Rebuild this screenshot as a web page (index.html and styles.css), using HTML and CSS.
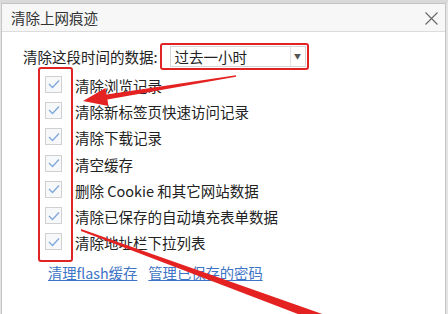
FILE: index.html
```html
<!DOCTYPE html>
<html lang="zh-CN">
<head>
  <meta charset="UTF-8">
  <title>清除上网痕迹</title>
  <link rel="stylesheet" href="styles.css">
</head>
<body>
  <div class="backdrop"></div>
  <div class="dialog">
    <div class="titlebar">
      <span class="title">清除上网痕迹</span>
      <span class="close">
        <svg width="13" height="13" viewBox="0 0 13 13"><path d="M0.5 0.5L12.5 12.5M12.5 0.5L0.5 12.5" stroke="#666" stroke-width="1.1" fill="none"/></svg>
      </span>
    </div>

    <div class="content">
      <div class="range-row">
        <span class="range-label">清除这段时间的数据:</span>
        <div class="mark select-mark">
          <div class="select">
            <span class="select-value">过去一小时</span>
            <span class="select-arrow">▼</span>
          </div>
        </div>
      </div>

      <div class="options">
        <span class="mark check-mark"></span>
        <label class="option"><span class="checkbox"><svg width="12" height="10" viewBox="0 0 12 10"><path d="M1 5L4.5 8.5L11 1.5" stroke="#7ea8dc" stroke-width="1.3" fill="none"/></svg></span>清除浏览记录</label>
        <label class="option"><span class="checkbox"><svg width="12" height="10" viewBox="0 0 12 10"><path d="M1 5L4.5 8.5L11 1.5" stroke="#7ea8dc" stroke-width="1.3" fill="none"/></svg></span>清除新标签页快速访问记录</label>
        <label class="option"><span class="checkbox"><svg width="12" height="10" viewBox="0 0 12 10"><path d="M1 5L4.5 8.5L11 1.5" stroke="#7ea8dc" stroke-width="1.3" fill="none"/></svg></span>清除下载记录</label>
        <label class="option"><span class="checkbox"><svg width="12" height="10" viewBox="0 0 12 10"><path d="M1 5L4.5 8.5L11 1.5" stroke="#7ea8dc" stroke-width="1.3" fill="none"/></svg></span>清空缓存</label>
        <label class="option"><span class="checkbox"><svg width="12" height="10" viewBox="0 0 12 10"><path d="M1 5L4.5 8.5L11 1.5" stroke="#7ea8dc" stroke-width="1.3" fill="none"/></svg></span>删除 Cookie 和其它网站数据</label>
        <label class="option"><span class="checkbox"><svg width="12" height="10" viewBox="0 0 12 10"><path d="M1 5L4.5 8.5L11 1.5" stroke="#7ea8dc" stroke-width="1.3" fill="none"/></svg></span>清除已保存的自动填充表单数据</label>
        <label class="option"><span class="checkbox"><svg width="12" height="10" viewBox="0 0 12 10"><path d="M1 5L4.5 8.5L11 1.5" stroke="#7ea8dc" stroke-width="1.3" fill="none"/></svg></span>清除地址栏下拉列表</label>
      </div>

      <div class="links">
        <a href="#">清理flash缓存</a>
        <a href="#">管理已保存的密码</a>
      </div>
    </div>
  </div>

  <!-- annotation arrows drawn over the dialog -->
  <svg class="arrows" width="448" height="314" viewBox="0 0 448 314">
    <polygon fill="#e52222" points="236,75.3 106.6,94.5 105.5,88.1 83,101 108.5,105.9 107.4,99.5 236,76.7"/>
    <polygon fill="#e52222" points="81,229 345,322 345,332 81,231"/>
  </svg>
</body>
</html>
```

FILE: styles.css
```css
body {
  margin: 0;
  background-color: #e4e4e4;
  font-family: "Noto Sans CJK SC", sans-serif;
  color: #222;
  height: 314px;
  overflow: hidden;
  position: relative;
}
.backdrop {
  height: 3px;
  background-color: #d9d9d9;
}
.dialog {
  margin-left: 1px;
  width: 445px;
  height: 320px;
  background-color: #fff;
  border: 1px solid #c4c4c4;
  box-sizing: border-box;
}
.titlebar {
  height: 28px;
  background-color: #f7f7f7;
  border-bottom: 1px solid #dcdcdc;
  display: flex;
  align-items: center;
  justify-content: space-between;
  padding: 0 7px 0 9px;
  box-sizing: border-box;
}
.title {
  font-size: 14.5px;
  color: #333;
}
.close {
  display: flex;
  margin-top: 1px;
}
.content {
  padding-left: 21px;
}
.range-row {
  display: flex;
  align-items: center;
  margin-top: 11px;
  font-size: 14.5px;
}
.mark {
  border: 2px solid #e02424;
  border-radius: 3px;
  box-sizing: border-box;
}
.select-mark {
  margin-left: 2px;
  width: 149px;
  height: 27px;
  padding: 1px 1px 1px 8px;
}
.select {
  height: 21px;
  border: 1px solid #d6d6d6;
  box-sizing: border-box;
  display: flex;
  align-items: center;
}
.select-value {
  flex: 1;
  padding-left: 4px;
  font-size: 14.5px;
  line-height: 19px;
}
.select-arrow {
  width: 14px;
  height: 19px;
  border-left: 1px solid #e2e2e2;
  font-size: 7px;
  line-height: 19px;
  text-align: center;
  color: #555;
}
.options {
  position: relative;
  margin-top: 2px;
}
.check-mark {
  position: absolute;
  left: 15px;
  top: -5px;
  width: 35px;
  height: 195px;
}
.option {
  display: flex;
  align-items: center;
  height: 26.3px;
  font-size: 14.5px;
}
.checkbox {
  width: 17px;
  height: 17px;
  margin-left: 22px;
  margin-right: 13px;
  margin-top: -2px;
  border: 1px solid #d0d0d0;
  background-color: #f7f8fa;
  box-sizing: border-box;
  display: flex;
  align-items: center;
  justify-content: center;
}
.links {
  display: flex;
  gap: 11px;
  margin-top: 7px;
  padding-left: 25px;
  font-size: 14.3px;
  line-height: 20px;
}
.links a {
  color: #3d74c6;
  text-decoration: underline;
}
.arrows {
  position: absolute;
  left: 0;
  top: 0;
  pointer-events: none;
}
```
